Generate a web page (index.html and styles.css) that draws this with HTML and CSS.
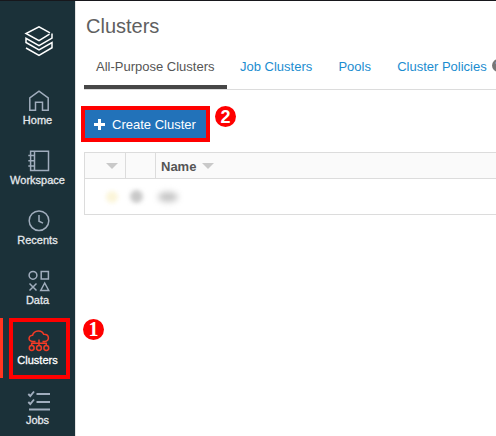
FILE: index.html
```
<!DOCTYPE html>
<html lang="en">
<head>
<meta charset="utf-8">
<title>Clusters</title>
<link rel="stylesheet" href="styles.css">
</head>
<body>
<div class="app">
  <nav class="sidebar">
    <a class="logo"><svg width="30" height="32" viewBox="0 0 30 32"><path d="M25.5 8.2 15 14.7 2 7.5 15 .8 26 6.8M28 7.5v4.6L15 19.6 2 12.3v4.2l13 7.3 13-7.3v5.2L15 29.3 2 22"/></svg></a>
    <a class="item"><svg width="22" height="22" viewBox="0 0 22 22"><path d="M1.8 20.3V8L11 1.2 20.2 8v12.3h-5.7v-8h-7v8z"/></svg><span>Home</span></a>
    <a class="item"><svg width="22" height="22" viewBox="0 0 22 22"><path d="M2.6 1.2h17.9v19.3H2.6zM6.5 1.2v19.3M.3 5.5h6.2M.3 10.8h6.2M.3 16h6.2"/></svg><span>Workspace</span></a>
    <a class="item"><svg width="22" height="22" viewBox="0 0 22 22"><circle cx="11" cy="10.7" r="9.8"/><path d="M11 5v6.3l4 1.8"/></svg><span>Recents</span></a>
    <a class="item"><svg width="22" height="22" viewBox="0 0 22 22"><circle cx="5" cy="5.3" r="3.9"/><path d="M13.2 1.6h7.2V9h-7.2zM1.5 13.5l7 7M8.5 13.5l-7 7M16.7 13l4 7.5h-8z"/></svg><span>Data</span></a>
    <a class="item active"><svg width="22" height="22" viewBox="0 0 22 22"><path d="M4.6 11.4C-.2 11.4 0 5.6 4.6 5.2 6-.1 14-.6 15.7 4.3c6-.2 6.2 7.1 1 7.1H14.500M7.500 11.400H4.600M11 9.500v6M3.700 15.500v-2.200h14.600v2.200"/><circle cx="3.700" cy="18" r="2.400"/><circle cx="11" cy="18" r="2.400"/><circle cx="18.300" cy="18" r="2.400"/></svg><span>Clusters</span></a>
    <a class="item"><svg width="24" height="22" viewBox="0 0 24 22"><path class="bold" d="M9.500 4H23M9.500 12H23M2 19.500h21M1.300 4l2 2L7 1.500M1.300 12l2 2L7 9.500"/></svg><span>Jobs</span></a>
  </nav>
  <main class="content">
    <h1>Clusters</h1>
    <div class="tabs">
      <a class="tab current">All-Purpose Clusters</a>
      <a class="tab">Job Clusters</a>
      <a class="tab">Pools</a>
      <a class="tab policies">Cluster Policies<span class="help">?</span></a>
    </div>
    <button class="create"><svg width="11" height="11" viewBox="0 0 11 11"><path d="M5.5 0v11M0 5.500h11"/></svg>Create Cluster</button>
    <div class="table">
      <div class="row head">
        <div class="cell sort"><i class="arrow"></i></div>
        <div class="cell"></div>
        <div class="cell name">Name<i class="arrow"></i></div>
      </div>
      <div class="row body"><i class="smudge pin"></i><i class="smudge state"></i><i class="smudge label"></i></div>
    </div>
  </main>
  <div class="frame frame-nav"></div>
  <div class="frame frame-create"></div>
  <div class="badge badge-one">1</div>
  <div class="badge badge-two">2</div>
</div>
</body>
</html>
```
FILE: styles.css
```
* { box-sizing: border-box; }
body {
  margin: 0;
  font: 13px/16px "Liberation Sans", Arial, sans-serif;
  color: #555;
  background: #fff;
}
.app {
  position: relative;
  display: flex;
  height: 436px;
  overflow: hidden;
  border-top: 1px solid #17171c;
}
.sidebar {
  flex: none;
  width: 75px;
  background: #1b3139;
}
.logo {
  display: block;
  height: 77px;
  padding: 25px 0 0 24px;
}
svg { display: block; fill: none; }
.logo svg { stroke: #fff; stroke-width: 1.5; }
.item {
  display: flex;
  flex-direction: column;
  align-items: center;
  height: 60px;
  padding-top: 12px;
  border-left: 3px solid transparent;
  padding-right: 3px;
  color: #e4e8ec;
  font-size: 11px;
  line-height: 14px;
  -webkit-text-stroke: 0.3px;
}
.item svg { stroke: #a0adbd; stroke-width: 1.5; margin-left: 2px; }
.item span { margin-top: 1px; white-space: nowrap; }
.item .bold { stroke-width: 1.9; }
.item.active { border-left-color: #ff3621; color: #fff; }
.item.active svg { stroke: #f23b26; }
.content {
  flex: 1;
  min-width: 0;
  border-left: 1px solid #e3e3e3;
  padding-left: 8px;
}
h1 {
  margin: 13px 0 0 2px;
  font-size: 20px;
  line-height: 24px;
  font-weight: 400;
  color: #606060;
}
.tabs {
  display: flex;
  height: 42px;
  margin-top: 10px;
  border-bottom: 1px solid #dcdcdc;
}
.tab {
  flex: none;
  height: 41px;
  padding: 11px 12px 0;
  margin-right: 2.2px;
  color: #1b8dd0;
  white-space: nowrap;
}
.tab.current {
  width: 143px;
  margin-right: 1px;
  color: #555;
  border-bottom: 4px solid #474747;
}
.policies { display: flex; }
.help {
  width: 13px;
  height: 13px;
  margin: 0 0 0 5px;
  border-radius: 50%;
  background: #777;
  color: #fff;
  font: bold 10px/13px "Liberation Sans", Arial, sans-serif;
  text-align: center;
}
.create {
  display: flex;
  align-items: center;
  gap: 7px;
  width: 122px;
  height: 30px;
  margin: 19px 0 0 1px;
  padding: 1px 0 0 9px;
  border: 0;
  background: #2272b9;
  color: #fff;
  font: 13px/16px "Liberation Sans", Arial, sans-serif;
  white-space: nowrap;
}
.create svg { stroke: #fff; stroke-width: 3; }
.table {
  height: 63px;
  margin-top: 13px;
  border: 1px solid #dcdcdc;
  border-right: 0;
}
.row { display: flex; }
.head {
  height: 26px;
  background: #fafafa;
  border-bottom: 1px solid #dcdcdc;
}
.cell {
  display: flex;
  align-items: center;
  width: 30px;
  border-right: 1px solid #dcdcdc;
}
.sort { width: 41px; padding-left: 21px; }
.name { flex: 1; padding: 2px 0 0 5px; gap: 6px; border: 0; font-weight: 700; }
.arrow {
  border: 6px solid transparent;
  border-top-color: #c9c9c9;
  border-bottom: 0;
}
.name .arrow { margin-bottom: 2px; }
.body { height: 35px; align-items: center; padding-left: 21px; }
.smudge { border-radius: 50%; height: 12px; }
.pin { width: 12px; background: #fbf5d9; filter: blur(2px); }
.state { width: 13px; height: 13px; margin-left: 12px; background: #c9c9c9; filter: blur(2px); }
.label { width: 20px; height: 10px; margin-left: 15px; background: #c4c4c4; filter: blur(3px); }
.frame { position: absolute; border: 4px solid #f00; }
.frame-nav { left: 9px; top: 317px; width: 61px; height: 61px; }
.frame-create { left: 81px; top: 105px; width: 129px; height: 36px; }
.badge {
  position: absolute;
  width: 21px;
  height: 21px;
  border-radius: 50%;
  background: #f00;
  color: #fff;
  text-align: center;
}
.badge-one { left: 83px; top: 318px; font: bold 20px/21px "Liberation Serif", serif; }
.badge-two { left: 215px; top: 105px; font: bold 18px/22px "Liberation Sans", sans-serif; }
```
